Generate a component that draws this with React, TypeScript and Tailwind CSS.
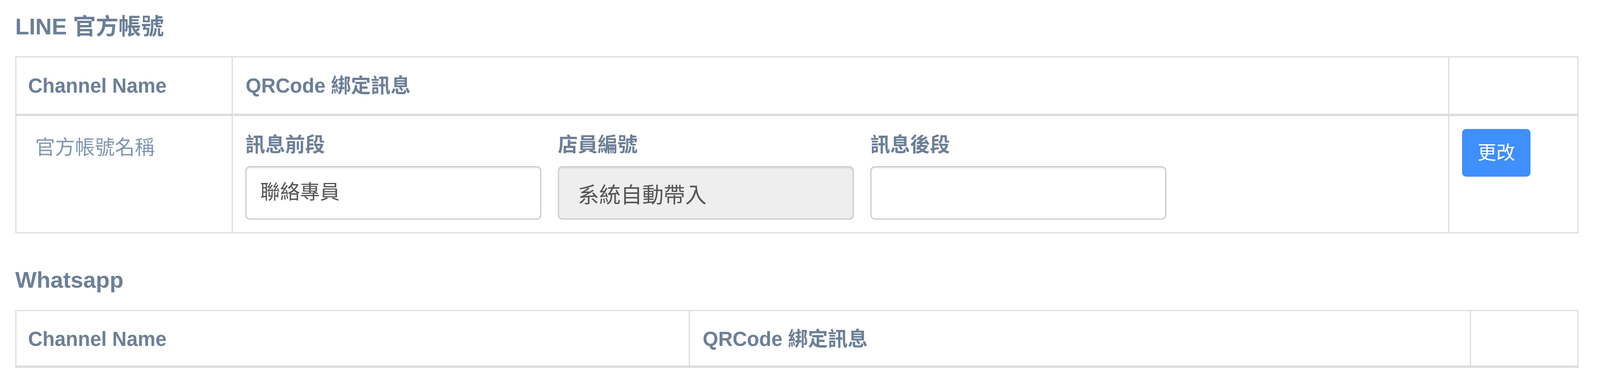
import { useState } from "react";

// The page is laid out for a 4096px-wide viewport; horizontal sizes follow the reference at 4096/4400.
const font = "font-['Liberation_Sans','Noto_Sans_CJK_TC',sans-serif]";

function SectionTitle({ children, className = "" }: { children: React.ReactNode; className?: string }) {
  return (
    <h4 className={`text-[58px] leading-[66px] font-bold text-[#6b7f97] ${className}`}>{children}</h4>
  );
}

function HeaderCell({ children, className = "" }: { children?: React.ReactNode; className?: string }) {
  return (
    <div
      className={`border-t-[3px] border-b-[6px] border-r-[3px] border-[#dddddd] text-[51px] leading-[76px] font-bold text-[#6b7f97] whitespace-nowrap ${className}`}
    >
      {children}
    </div>
  );
}

function Field({
  label,
  value,
  disabled,
  onChange,
}: {
  label: string;
  value: string;
  disabled?: boolean;
  onChange?: (v: string) => void;
}) {
  return (
    <div className="flex flex-col w-[758px] shrink-0">
      <label className="text-[51px] leading-[76px] font-bold text-[#6b7f97]">{label}</label>
      <input
        value={value}
        readOnly={disabled}
        onChange={(e) => onChange?.(e.target.value)}
        className={
          disabled
            ? "mt-[16px] h-[137px] w-full rounded-[12px] border-[3px] border-[#cccccc] bg-[#eeeeee] pl-[48px] text-[55px] text-[#555555] shadow-[inset_0_3px_3px_rgba(0,0,0,0.075)] outline-none"
            : "mt-[16px] h-[137px] w-full rounded-[12px] border-[3px] border-[#cccccc] bg-white pl-[35px] pb-[14px] text-[51px] text-[#555555] shadow-[inset_0_3px_3px_rgba(0,0,0,0.075)] outline-none"
        }
      />
    </div>
  );
}

export default function App() {
  const [prefix, setPrefix] = useState("聯絡專員");
  const [suffix, setSuffix] = useState("");

  return (
    <div className={`min-h-[985px] bg-white pl-[39px] pr-[55px] pt-[35px] ${font}`}>
      <SectionTitle>LINE 官方帳號</SectionTitle>

      {/* LINE table */}
      <div className="mt-[43px] grid grid-cols-[557px_1fr_331px]">
        <HeaderCell className="border-l-[3px] pl-[30px] pt-[35px] pb-[33px]">Channel Name</HeaderCell>
        <HeaderCell className="pl-[33px] pt-[35px] pb-[33px]">QRCode 綁定訊息</HeaderCell>
        <HeaderCell />

        <div className="border-l-[3px] border-r-[3px] border-b-[3px] border-[#dddddd] pl-[48px] pt-[43px] text-[51px] leading-[76px] text-[#8197b0]">
          官方帳號名稱
        </div>
        <div className="border-r-[3px] border-b-[3px] border-[#dddddd] pl-[32px] pt-[36px] pb-[32px]">
          <div className="flex gap-[42px]">
            <Field label="訊息前段" value={prefix} onChange={setPrefix} />
            <Field label="店員編號" value="系統自動帶入" disabled />
            <Field label="訊息後段" value={suffix} onChange={setSuffix} />
          </div>
        </div>
        <div className="border-r-[3px] border-b-[3px] border-[#dddddd] pl-[33px] pt-[33px]">
          <button className="h-[122px] w-[175px] rounded-[10px] bg-[#3f8ffd] text-[48px] leading-none text-white">
            更改
          </button>
        </div>
      </div>

      <SectionTitle className="mt-[86px]">Whatsapp</SectionTitle>

      {/* Whatsapp table */}
      <div className="mt-[44px] grid grid-cols-[1727px_1fr_275px]">
        <HeaderCell className="border-l-[3px] pl-[30px] pt-[34px] pb-[29px]">Channel Name</HeaderCell>
        <HeaderCell className="pl-[33px] pt-[34px] pb-[29px]">QRCode 綁定訊息</HeaderCell>
        <HeaderCell />
      </div>
    </div>
  );
}
